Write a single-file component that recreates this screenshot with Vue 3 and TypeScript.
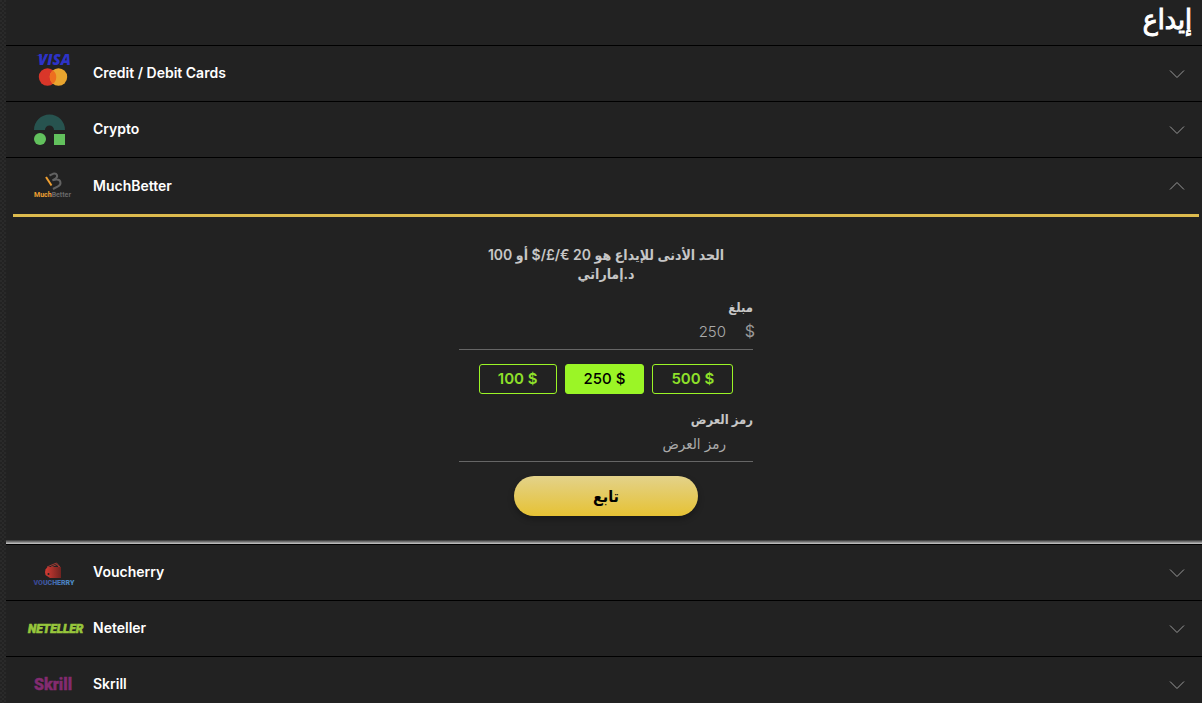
<script setup lang="ts">
import { ref } from 'vue'

type MethodId = 'cards' | 'crypto' | 'muchbetter' | 'voucherry' | 'neteller' | 'skrill'

interface Method {
  id: MethodId
  name: string
}

const methods: Method[] = [
  { id: 'cards', name: 'Credit / Debit Cards' },
  { id: 'crypto', name: 'Crypto' },
  { id: 'muchbetter', name: 'MuchBetter' },
  { id: 'voucherry', name: 'Voucherry' },
  { id: 'neteller', name: 'Neteller' },
  { id: 'skrill', name: 'Skrill' },
]

const presets: number[] = [100, 250, 500]
const open = ref<MethodId | null>('muchbetter')
const amount = ref('250')
const promo = ref('')

function toggle(id: MethodId): void {
  open.value = open.value === id ? null : id
}
</script>

<template>
  <main class="deposit">
    <h1 class="title" dir="rtl" lang="ar">إيداع</h1>

    <section v-for="m in methods" :key="m.id" class="method">
      <button
        type="button"
        class="method-head"
        :aria-expanded="open === m.id"
        @click="toggle(m.id)"
      >
        <svg class="logo" viewBox="0 0 60 50" aria-hidden="true">
          <g v-if="m.id === 'cards'">
            <path d="M16 6h5l1.500 2.500q-2-2-6.500-2.500z" fill="#2d33c8" />
            <text x="18" y="16" class="visa">VISA</text>
            <circle cx="27.500" cy="28" r="8.700" fill="#d93629" />
            <circle cx="38.500" cy="28" r="8.700" fill="#e9a52f" />
            <path d="M33 21.200a8.700 8.700 0 0 1 0 13.600a8.700 8.700 0 0 1 0-13.600z" fill="#ee6f1f" />
          </g>
          <g v-else-if="m.id === 'crypto'">
            <path d="M14 25a15.500 15.500 0 0 1 31 0h-11a4.500 4.500 0 0 0-9 0z" fill="#27534f" />
            <circle cx="20" cy="34" r="6" fill="#62c15d" />
            <path d="M34 29h11v11h-11z" fill="#62c15d" />
          </g>
          <g v-else-if="m.id === 'muchbetter'" fill="none">
            <path d="M26 16l5.500 8.500" stroke="#f0a032" stroke-width="2" />
            <path
              d="M29.500 14.500l3.500-1.700c4-1.500 5.500 3 2.500 4.700l-3 1.800l3.500-.8c5-.5 6 4.700 2 6.800l-5 2.700"
              stroke="#626262"
              stroke-width="2"
            />
            <text x="14" y="36" class="mb"><tspan fill="#f0a032">Much</tspan><tspan fill="#686868">Better</tspan></text>
          </g>
          <g v-else-if="m.id === 'voucherry'">
            <defs>
              <linearGradient id="wallet" x1="0" x2="1">
                <stop offset="0" stop-color="#d43b33" />
                <stop offset="1" stop-color="#702320" />
              </linearGradient>
              <linearGradient id="vtext" x1="0" x2="1">
                <stop offset="0" stop-color="#37408e" />
                <stop offset="1" stop-color="#4f94d0" />
              </linearGradient>
            </defs>
            <path d="M27 19l9.500-4l3.500 4M31 19l6-2.500l2 2.500" fill="none" stroke="#a03a34" />
            <path d="M27.500 19h13.500v11h-11l-4.500-3q-1-2.500 0-5.500z" fill="url(#wallet)" />
            <circle cx="28.500" cy="26" r="1" fill="#222" />
            <text x="13.500" y="37" class="voucherry" fill="url(#vtext)">VOUCHERRY</text>
          </g>
          <text v-else-if="m.id === 'neteller'" x="8" y="29" class="neteller">NETELLER</text>
          <text v-else x="14" y="30" class="skrill">Skrill</text>
        </svg>
        <span class="method-name">{{ m.name }}</span>
        <svg class="chevron" :class="{ up: open === m.id }" viewBox="0 0 16 10" aria-hidden="true">
          <path d="M1 1.500l7 7l7-7" />
        </svg>
      </button>

      <div v-if="open === m.id" class="panel">
        <form class="form" dir="rtl" lang="ar" @submit.prevent>
          <p class="note">الحد الأدنى للإيداع هو 20 €/£/$ أو 100 د.إماراتي</p>

          <label class="label" for="amount">مبلغ</label>
          <div class="field">
            <span class="currency">$</span>
            <input id="amount" v-model="amount" class="input" type="text" inputmode="decimal" />
          </div>

          <div class="presets" dir="ltr">
            <button
              v-for="p in presets"
              :key="p"
              type="button"
              class="preset"
              :class="{ active: amount === String(p) }"
              @click="amount = String(p)"
            >{{ p }} $</button>
          </div>

          <label class="label" for="promo">رمز العرض</label>
          <div class="field">
            <input id="promo" v-model="promo" class="input" type="text" placeholder="رمز العرض" />
          </div>

          <button type="submit" class="submit">تابع</button>
        </form>
      </div>
    </section>
  </main>
</template>

<style>
body {
  background-color: #252525;
  background-image: repeating-conic-gradient(#222 0 25%, #2a2a2a 0 50%);
  background-size: 4px 4px;
  overflow: hidden;
}
</style>

<style scoped>
.deposit {
  box-sizing: border-box;
  min-height: 100vh;
  margin-left: 6px;
  background: #222;
  color: #fff;
  font-family: Inter, "DejaVu Sans Condensed", "DejaVu Sans", sans-serif;
}

.title {
  box-sizing: border-box;
  height: 45px;
  margin: 0;
  padding: 0 10px;
  font-size: 28px;
  line-height: 38px;
  font-weight: 500;
  -webkit-text-stroke: 1px #fff;
}

.method {
  border-top: 1px solid #000;
}

.method-head {
  display: flex;
  align-items: center;
  width: 100%;
  height: 55px;
  padding: 0 17px 0 14px;
  border: 0;
  background: transparent;
  color: #fff;
  font-family: inherit;
  font-size: 14px;
  font-weight: 600;
  text-align: left;
  cursor: pointer;
}

.method-head[aria-expanded="true"] {
  height: 56px;
}

.logo {
  flex: none;
  width: 60px;
  height: 50px;
  margin-right: 13px;
  overflow: visible;
}

.visa {
  fill: #2d33c8;
  font: italic 800 15px "Open Sans", sans-serif;
}

.mb {
  font: 700 7px Roboto, sans-serif;
}

.voucherry {
  font: 900 7px Roboto, sans-serif;
}

.neteller {
  fill: #97c63c;
  stroke: #97c63c;
  stroke-width: 0.6;
  font: italic 900 12px Roboto, sans-serif;
}

.skrill {
  fill: #832b70;
  stroke: #832b70;
  stroke-width: 0.4;
  font: 900 16px Roboto, sans-serif;
}

.method-name {
  flex: 1;
  padding-bottom: 2px;
}

.chevron {
  width: 16px;
  height: 10px;
  fill: none;
  stroke: #999;
  stroke-width: 1;
}

.chevron.up {
  transform: rotate(180deg);
}

.panel::before {
  content: "";
  display: block;
  height: 3px;
  margin: 0 3px 0 7px;
  background: #ddbb4e;
}

.panel::after {
  content: "";
  display: block;
  height: 4px;
  background: linear-gradient(#333, #ccc);
}

.form {
  display: flex;
  flex-direction: column;
  width: 294px;
  margin: 0 auto;
  padding: 28px 0 24px;
  border-left: 4px solid transparent;
  color: #c6c6c6;
}

.note {
  margin: 0 20px 14px;
  font-size: 14px;
  line-height: 19px;
  font-weight: 600;
  text-align: center;
}

.label {
  font-size: 13px;
  line-height: 20px;
  font-weight: 700;
}

.field {
  display: flex;
  align-items: center;
  height: 32px;
  padding-right: 27px;
  border-bottom: 1px solid #666;
  position: relative;
}

.currency {
  position: absolute;
  right: -2px;
  color: #999;
  font-size: 16px;
  line-height: 28px;
  top: 0;
}

.input {
  width: 100%;
  height: 28px;
  margin: 0 0 4px;
  padding: 0;
  border: 0;
  outline: 0;
  background: transparent;
  color: #aaa;
  font-family: inherit;
  font-size: 15px;
  font-weight: 300;
}

.input::placeholder {
  color: #aaa;
  opacity: 1;
}

.presets {
  display: flex;
  justify-content: center;
  gap: 8px;
  margin: 14px 0 15px;
}

.preset {
  height: 30px;
  padding: 0 18px 2px;
  border: 1px solid #9bf526;
  border-radius: 3px;
  background: transparent;
  color: #8fe02a;
  font-family: inherit;
  font-size: 15px;
  font-weight: 600;
}

.preset.active {
  background: #9bf526;
  color: #000;
  font-weight: 500;
}

.submit {
  align-self: center;
  width: 184px;
  height: 40px;
  margin-top: 14px;
  border: 0;
  border-radius: 20px;
  background: linear-gradient(#e3d28a, #e6c234);
  box-shadow: 0 3px 6px rgba(0, 0, 0, 0.3);
  color: #000;
  font-family: inherit;
  font-size: 16px;
  font-weight: 700;
}
</style>
